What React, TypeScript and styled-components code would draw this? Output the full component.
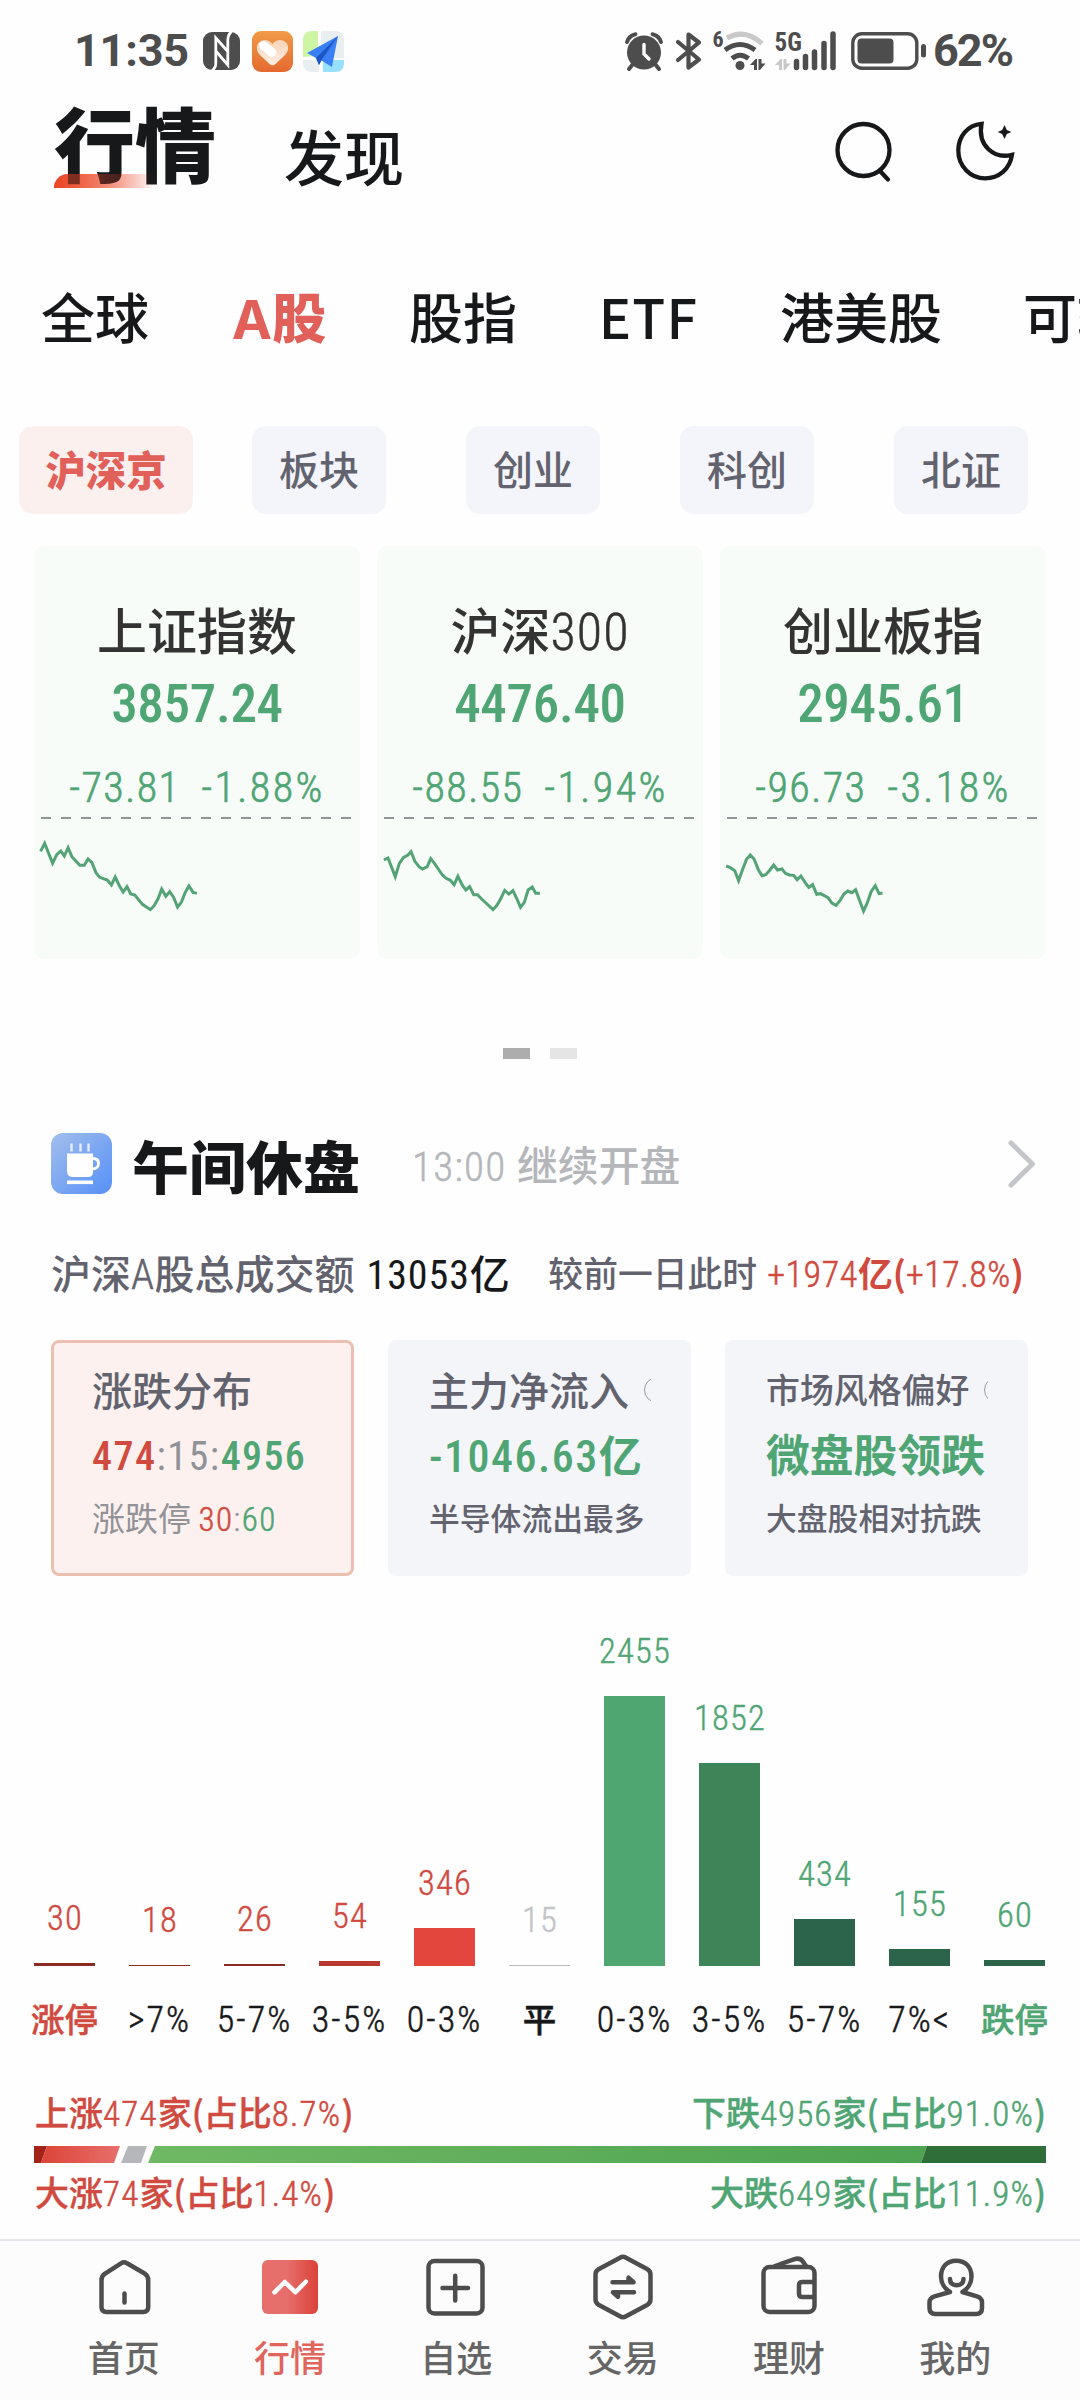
import React from 'react';
import styled, { createGlobalStyle } from 'styled-components';

const CJK = `"Noto Sans CJK SC", "Noto Sans", sans-serif`;
const DIN = `"Roboto Condensed", Roboto, sans-serif`;
const RED = '#d04a40';
const GREEN = '#4fa573';
const INK = '#17181a';
const SLATE = '#62636f';

const Global = createGlobalStyle`
  html, body { margin: 0; background: #fff; }
  * { box-sizing: border-box; }
  body { font-family: ${CJK}; color: ${INK}; }
  svg { display: block; flex: none; overflow: visible; }
`;

const Page = styled.div`
  width: 1080px;
  height: 2400px;
  overflow: hidden;
  background: #fefefe;
  display: flex;
  flex-direction: column;
  & > * { flex-shrink: 0; }
`;

const Num = styled.span<{ $w?: number; $size?: number; $ls?: number; $c?: string }>`
  font-family: ${DIN};
  line-height: 0;
  font-weight: ${p => p.$w ?? 300};
  -webkit-text-stroke: ${p => ((p.$w ?? 300) > 300 ? '0' : '0.5px currentColor')};
  letter-spacing: ${p => p.$ls ?? 1}px;
  ${p => p.$size && `font-size: ${p.$size}px;`}
  ${p => p.$c && `color: ${p.$c};`}
`;

/* ---------- status bar ---------- */

const StatusBar = styled.header`
  height: 102px;
  padding: 0 67px 0 74px;
  display: flex;
  justify-content: space-between;
  align-items: center;
  color: #4d4d4d;
`;
const StatusGroup = styled.div`
  display: flex;
  align-items: center;
`;
const Clock = styled.div`
  width: 129px;
  font: 700 45px/50px Roboto, sans-serif;
  letter-spacing: -0.2px;
`;
const StatusIcon = styled.svg<{ $ml?: number }>`
  margin-left: ${p => p.$ml ?? 0}px;
`;
const Percent = styled.div`
  width: 80px;
  margin-left: 5px;
  font: 700 45px/50px Roboto, sans-serif;
  letter-spacing: -2px;
  white-space: nowrap;
`;
const TinyText = styled.text`
  font-family: ${DIN};
  font-weight: 700;
  fill: #4d4d4d;
`;

/* ---------- header ---------- */

const Header = styled.div`
  height: 86px;
  padding: 0 65px 0 54px;
  display: flex;
  align-items: center;
`;
const MainTitle = styled.h1`
  position: relative;
  z-index: 0;
  margin: 0;
  width: 164px;
  height: 86px;
  font-size: 81px;
  line-height: 77px;
  font-weight: 900;
  white-space: nowrap;
  &::before, &::after {
    content: '';
    position: absolute;
    left: 0;
    bottom: 0;
    width: 101px;
    height: 14px;
    border-top-left-radius: 14px;
    background: linear-gradient(90deg, #ec4626, rgba(236, 70, 38, 0));
  }
  &::before { z-index: -1; }
  &::after { opacity: 0.6; }
`;
const SubTitle = styled.h2`
  margin: 20px auto 0 66px;
  font-size: 60px;
  line-height: 60px;
  font-weight: 500;
`;
const HeaderIcons = styled.div`
  display: flex;
  gap: 60px;
  margin-top: 14px;
`;

/* ---------- tabs ---------- */

const Tabs = styled.nav`
  margin-top: 88px;
  padding-left: 41px;
  height: 80px;
  display: flex;
  gap: 81px;
  overflow: hidden;
`;
const Tab = styled.span<{ $active?: boolean; $width: number; $ls?: number }>`
  flex: none;
  width: ${p => p.$width}px;
  font-size: 54px;
  line-height: 80px;
  font-weight: ${p => (p.$active ? 900 : 500)};
  color: ${p => (p.$active ? '#e2605a' : INK)};
  letter-spacing: ${p => p.$ls ?? 0}px;
  text-align: center;
  white-space: nowrap;
`;
const TabLatin = styled.span`
  font-family: Inter, sans-serif;
  font-weight: 700;
  line-height: 0;
`;

const Pills = styled.div`
  margin: 70px 0 0 -2px;
  display: grid;
  grid-template-columns: repeat(5, 214px);
  justify-items: center;
`;
const Pill = styled.span<{ $active?: boolean }>`
  width: ${p => (p.$active ? 174 : 134)}px;
  margin-left: ${p => (p.$active ? 2 : 0)}px;
  height: 88px;
  border-radius: 14px;
  text-align: center;
  font-size: ${p => (p.$active ? 40.5 : 40)}px;
  line-height: 85px;
  font-weight: ${p => (p.$active ? 900 : 500)};
  color: ${p => (p.$active ? '#e2605a' : SLATE)};
  background: ${p => (p.$active ? '#fcf0ef' : '#f4f5fa')};
`;

/* ---------- index cards ---------- */

const IndexRow = styled.div`
  margin: 32px 34px 0;
  display: grid;
  grid-template-columns: repeat(3, 326px);
  column-gap: 17px;
`;
const IndexCard = styled.article`
  height: 413px;
  padding-top: 52px;
  border-radius: 10px;
  background: #f7fcf9;
  display: flex;
  flex-direction: column;
  align-items: center;
`;
const IndexName = styled.div`
  font-size: 50px;
  line-height: 60px;
  font-weight: 500;
  color: #333;
`;
const IndexValue = styled.div`
  margin-top: 26px;
  height: 40px;
  font: 500 53px/40px ${DIN};
  letter-spacing: -0.3px;
  color: ${GREEN};
`;
const IndexChange = styled.div`
  margin-top: 44px;
  height: 40px;
  display: flex;
  gap: 21px;
  font: 300 42px/40px ${DIN};
  -webkit-text-stroke: 0.6px currentColor;
  letter-spacing: 1.4px;
  color: ${GREEN};
`;
const ChangePct = styled.span`
  letter-spacing: 2.4px;
`;
const BaseLine = styled.div`
  margin-top: 9px;
  width: 312px;
  height: 2px;
  background: repeating-linear-gradient(90deg, #8f9798 0 10px, transparent 10px 20px);
`;

const Pager = styled.div`
  margin-top: 89px;
  display: flex;
  justify-content: center;
  gap: 20px;
`;
const PagerDot = styled.i<{ $on?: boolean }>`
  width: 27px;
  height: 11px;
  background: ${p => (p.$on ? '#adadad' : '#e5e5e5')};
`;

/* ---------- noon section ---------- */

const SectionHead = styled.div`
  margin-top: 74px;
  height: 61px;
  padding: 0 44px 0 51px;
  display: flex;
  align-items: center;
`;
const SectionTitle = styled.h3`
  margin: 0 0 0 20px;
  width: 228px;
  font-size: 57px;
  line-height: 60px;
  font-weight: 900;
  white-space: nowrap;
`;
const SectionNote = styled.div`
  margin: 1px auto 0 52px;
  font-size: 40.8px;
  line-height: 60px;
  font-weight: 500;
  color: #b4b6ba;
  white-space: nowrap;
`;

const Turnover = styled.div`
  margin-top: 53px;
  height: 50px;
  padding: 0 56px 0 51px;
  display: flex;
  justify-content: space-between;
  line-height: 50px;
  white-space: nowrap;
`;
const TurnoverItem = styled.div<{ $size: number }>`
  font-size: ${p => p.$size}px;
  color: ${SLATE};
  font-weight: 500;
`;
const Amount = styled.span<{ $c: string; $w: number; $ml: number }>`
  margin-left: ${p => p.$ml}px;
  color: ${p => p.$c};
  font-weight: ${p => p.$w};
`;

const StatRow = styled.div`
  margin: 43px 51px 0;
  display: grid;
  grid-template-columns: repeat(3, 303px);
  column-gap: 34px;
`;
const StatCard = styled.article<{ $active?: boolean }>`
  height: 236px;
  border-radius: 8px;
  border: 3px solid ${p => (p.$active ? '#ebc0b0' : '#f3f5f9')};
  background: ${p => (p.$active ? '#fcf1ef' : '#f3f5f9')};
  padding: 26px 37px 0 38px;
  white-space: nowrap;
`;
const StatTitle = styled.div<{ $size?: number }>`
  display: flex;
  align-items: center;
  overflow: hidden;
  height: 44px;
  margin: -2px 0;
  font-size: ${p => p.$size ?? 40}px;
  line-height: 44px;
  font-weight: 500;
  color: ${SLATE};
`;
const HelpRing = styled.i`
  flex: none;
  width: 26px;
  height: 26px;
  margin: 1px 0 0 15px;
  border: 1.5px solid #9a9ba3;
  border-radius: 50%;
`;
const StatValue = styled.div<{ $size: number }>`
  margin-top: 19px;
  height: 50px;
  font-size: ${p => p.$size}px;
  line-height: 50px;
  font-weight: 700;
  color: ${GREEN};
`;
const StatFoot = styled.div<{ $size: number; $c?: string; $w?: number }>`
  margin-top: 19px;
  height: 40px;
  font-size: ${p => p.$size}px;
  line-height: 40px;
  font-weight: ${p => p.$w ?? 500};
  color: ${p => p.$c ?? SLATE};
`;

/* ---------- distribution chart ---------- */

const Chart = styled.div`
  height: 390px;
  padding-left: 17px;
  display: grid;
  grid-template-columns: repeat(11, 95px);
  align-items: end;
`;
const Column = styled.div`
  display: flex;
  flex-direction: column;
  align-items: center;
`;
const Count = styled.span<{ $c: string }>`
  margin: 0 0 28px 1px;
  font: 300 34.5px/34px ${DIN};
  -webkit-text-stroke: 0.4px currentColor;
  letter-spacing: 1.2px;
  color: ${p => p.$c};
`;
const Bar = styled.div<{ $h: number; $c: string }>`
  width: 61px;
  height: ${p => p.$h}px;
  background: ${p => p.$c};
`;
const AxisRow = styled.div`
  margin-top: 32px;
  padding-left: 17px;
  height: 40px;
  display: grid;
  grid-template-columns: repeat(11, 95px);
`;
const AxisLabel = styled.span<{ $c: string }>`
  font-size: 33.5px;
  line-height: 40px;
  font-weight: 500;
  -webkit-text-stroke: 0.5px currentColor;
  text-align: center;
  white-space: nowrap;
  color: ${p => p.$c};
`;

const RatioText = styled.div<{ $mt: number }>`
  margin: ${p => p.$mt}px 34px 0 35px;
  height: 40px;
  display: flex;
  justify-content: space-between;
  font-size: 34px;
  line-height: 40px;
  font-weight: 500;
  -webkit-text-stroke: 0.4px currentColor;
`;
const RatioSide = styled.span<{ $c: string }>`
  color: ${p => p.$c};
`;
const RatioChart = styled.svg`
  margin: 14px 34px 0;
`;

/* ---------- bottom navigation ---------- */

const BottomNav = styled.nav`
  margin-top: 27px;
  height: 161px;
  padding: 10px 41.5px 0 40.5px;
  border-top: 2px solid #e5e6ec;
  background: #fcfcfc;
  display: grid;
  grid-template-columns: repeat(6, 1fr);
`;
const NavItem = styled.div<{ $active?: boolean }>`
  display: flex;
  flex-direction: column;
  align-items: center;
  gap: 13px;
  font-size: 36px;
  line-height: 40px;
  font-weight: 500;
  color: ${p => (p.$active ? '#e0655d' : '#666')};
`;
const NavSvg = styled.svg`
  width: 72px;
  height: 72px;
  fill: none;
  stroke: #4d4d4d;
  stroke-width: 4.5;
  stroke-linecap: round;
  stroke-linejoin: round;
`;

const indices = [
  { name: <>上证指数</>, value: '3857.24', diff: '-73.81', pct: '-1.88%',
    line: '118,964 130,940 153,1000 165,974 177,963 187,978 198,953 209,980 232,1006 245,1006 256,987 267,997 279,1028 290,1042 312,1050 324,1065 335,1041 347,1067 358,1086 369,1070 380,1092 392,1095 414,1123 437,1139 448,1127 459,1107 470,1077 482,1099 493,1085 504,1101 516,1131 527,1117 538,1088 549,1068 561,1087 572,1090' },
  { name: <>沪深<Num $size={52}>300</Num></>, value: '4476.40', diff: '-88.55', pct: '-1.94%',
    line: '119,990 131,984 152,1040 164,1000 176,982 188,976 198,965 209,994 221,1010 231,1017 245,1010 255,986 266,1000 277,1017 289,1035 300,1045 312,1051 323,1064 334,1039 346,1064 357,1080 368,1070 380,1094 391,1094 403,1107 436,1139 448,1125 459,1105 470,1081 482,1092 494,1082 505,1106 516,1132 527,1117 538,1080 550,1071 560,1090 572,1090' },
  { name: <>创业板指</>, value: '2945.61', diff: '-96.73', pct: '-3.18%',
    line: '117,1008 129,1013 142,1022 153,1052 164,1020 176,988 187,975 198,987 210,1019 221,1037 232,1034 244,1020 255,1005 266,1020 279,1017 289,1030 301,1035 313,1036 323,1049 334,1038 346,1057 357,1072 368,1064 380,1093 391,1091 413,1103 424,1119 436,1126 448,1111 459,1092 470,1083 482,1088 493,1079 504,1110 516,1143 527,1118 538,1085 550,1067 561,1091 571,1089' },
];

const bins = [
  { label: '涨停', cjk: true, n: 30, h: 3, bar: '#8c2b26', text: RED, axis: RED },
  { label: '>7%', n: 18, h: 1, bar: '#8c2b26', text: RED, axis: INK },
  { label: '5-7%', n: 26, h: 2, bar: '#8c2b26', text: RED, axis: INK },
  { label: '3-5%', n: 54, h: 5, bar: '#b93931', text: RED, axis: INK },
  { label: '0-3%', n: 346, h: 38, bar: '#e3463c', text: RED, axis: INK },
  { label: '平', cjk: true, n: 15, h: 1, bar: '#b9babd', text: '#c3c4c8', axis: INK },
  { label: '0-3%', n: 2455, h: 270, bar: '#4fa670', text: GREEN, axis: INK },
  { label: '3-5%', n: 1852, h: 203, bar: '#3d8459', text: GREEN, axis: INK },
  { label: '5-7%', n: 434, h: 47, bar: '#2b634b', text: GREEN, axis: INK },
  { label: '7%<', n: 155, h: 17, bar: '#2b634b', text: GREEN, axis: INK },
  { label: '跌停', cjk: true, n: 60, h: 6, bar: '#2b634b', text: GREEN, axis: GREEN },
];

const navItems = [
  { label: '首页', icon: <>
    <path d="M13.5 29q0-4 3.2-6.2L33 12.3q3-2 6 0L57 22.8q3.2 2.2 3.2 6.2V56q0 5-5 5H18.5q-5 0-5-5z" />
    <path d="M36.5 42.5v9" /></> },
  { label: '行情', active: true, icon: <>
    <defs><linearGradient id="nav-hot"><stop offset="0.45" stopColor="#e66e6b" /><stop offset="1" stopColor="#da4238" /></linearGradient></defs>
    <rect x="8" y="9" width="56" height="54" rx="6" fill="url(#nav-hot)" stroke="none" />
    <path d="M20.5 41.3 30.8 31l10.7 10.3 10.3-10.6" stroke="#fff" /></> },
  { label: '自选', icon: <>
    <rect x="8.5" y="10" width="54" height="52.5" rx="6" />
    <path d="M22.5 37h25.5M35.2 24.8v24.6" /></> },
  { label: '交易', icon: <>
    <path d="M33 6.7q3-1.8 6 0l21.5 11.6q3 1.8 3 5.4v24.6q0 3.6-3 5.4L39 65.3q-3 1.8-6 0L11.5 53.7q-3-1.8-3-5.4V23.7q0-3.6 3-5.4z" />
    <path d="M25.5 31.2H46.5L41.5 26.7v4M47 41.3H26l5 4.5v-4" /></> },
  { label: '理财', icon: <>
    <rect x="10.5" y="16" width="51" height="45" rx="6" />
    <path d="M22 15 41.5 8.2q5-1.8 8 1.8l3.5 5M61 31H49.5q-3.5 0-3.5 3v9q0 3 3.5 3H61" /></> },
  { label: '我的', icon: <>
    <path d="M43.5 41 58 45.3q5 1.7 5 6V57q0 6-6 6H16.5q-6 0-6-6v-5.7q0-4.3 5-6L31 41C26 38 22 32 22 25.5 22 16 28 9.7 37.2 9.7S52.5 16 52.5 25.5C52.5 32 48.500 38 43.500 41" />
    <path d="M31 28q0 6 6.7 6.2Q44.3 34 44.5 28" /></> },
];

export default function App() {
  return (
    <Page>
      <Global />
      <StatusBar>
        <StatusGroup>
          <Clock>11:35</Clock>
          <StatusIcon width="37" height="38" viewBox="0 0 37 38">
            <rect width="37" height="38" rx="9" fill="#4d4d4d" />
            <path d="M9 38.5Q12.8 36 12.8 31V6L24.8 19.5M28.5-.5Q24.8 3 24.8 8V33L12.8 19" fill="none" stroke="#fefefe" strokeWidth="2.8" />
          </StatusIcon>
          <StatusIcon $ml={12} width="41" height="41" viewBox="0 0 41 41">
            <defs>
              <linearGradient id="orange" x2="0" y2="1"><stop stopColor="#f19a48" /><stop offset="1" stopColor="#e46a30" /></linearGradient>
              <linearGradient id="heart" x2="0" y2="1"><stop stopColor="#f8d3b8" /><stop offset="1" stopColor="#fdeee2" /></linearGradient>
            </defs>
            <rect width="41" height="41" rx="9" fill="url(#orange)" />
            <path d="M20.5 13C17 8 10 7.5 6.5 12c-3.5 4.5-1 9.5 2 12.5l9 8.5q3 2.5 6 0l9-8.5c3-3 5.5-8 2-12.5C31 7.5 24 8 20.5 13z" fill="url(#heart)" />
            <path d="M11.5 14.5 20 21.5" stroke="#fff" strokeWidth="9" strokeLinecap="round" />
          </StatusIcon>
          <StatusIcon $ml={10} width="41" height="41" viewBox="0 0 41 41">
            <path d="M15 0v25L0 26V9q0-9 9-9z" fill="#cdf5a4" />
            <path d="M18 0h14q9 0 9 9v18H18zM0 29h16v12H9q-9 0-9-9z" fill="#e9eff0" />
            <path d="M20 29h21v3q0 9-9 9H20z" fill="#98e1fc" />
            <path d="M35 5 4 22l9 5 3 7 2.5-4.5L29 36z" fill="#3b7ff5" />
            <path d="M35 5 13 27l3 7 2.5-5z" fill="#1c55c4" />
          </StatusIcon>
        </StatusGroup>
        <StatusGroup>
          <StatusIcon width="38" height="38" viewBox="0 0 38 38">
            <circle cx="19" cy="20.5" r="17" fill="#4d4d4d" />
            <path d="M2 10Q4 3.5 10.5 2.2M36 10Q34 3.5 27.5 2.2M8 32l-4 5M30 32l4 5" stroke="#4d4d4d" strokeWidth="4" fill="none" strokeLinecap="round" />
            <path d="M19 12.5v9.500l5 5" stroke="#fff" strokeWidth="3.4" fill="none" strokeLinecap="round" />
          </StatusIcon>
          <StatusIcon $ml={13} width="26" height="38" viewBox="0 0 26 38">
            <path d="M2 10 23 27.5 12.5 35.5V2.5L23 10.5 2 28" stroke="#4d4d4d" strokeWidth="4.2" fill="none" strokeLinejoin="round" strokeLinecap="round" />
          </StatusIcon>
          <StatusIcon $ml={11} width="54" height="42" viewBox="0 0 54 42">
            <TinyText x="-.5" y="17" fontSize="22">6</TinyText>
            <g fill="none" strokeWidth="5">
              <path d="M14 8Q32-2 49 13.5" stroke="#c9c9c9" />
              <path d="M12 20Q27 9 42 20" stroke="#4d4d4d" />
              <path d="M19 28.5Q27 22 35.5 28.5" stroke="#4d4d4d" />
            </g>
            <circle cx="27" cy="35.5" r="4.5" fill="#4d4d4d" />
            <path d="M37 35 42.5 29h1.5v11h-3v-5zM45.5 29h3v4.5h4L47 40h-1.5z" fill="#4d4d4d" />
          </StatusIcon>
          <StatusIcon $ml={8} width="62" height="42" viewBox="0 0 62 42">
            <TinyText x="-.5" y="21" fontSize="25">5G</TinyText>
            <path d="M0 35 5.5 29H7v11H4v-5zM8.500 29h3v4.500h4L10 40H8.500z" fill="#c9c9c9" />
            <path d="M21.5 31.5v6M30.5 26.5v11M39.5 22v15.5M49 13.5v24M58 4v33.5" stroke="#4d4d4d" strokeWidth="5.5" strokeLinecap="round" />
          </StatusIcon>
          <StatusIcon $ml={14} width="77" height="38" viewBox="0 0 77 38">
            <rect x="1.8" y="1.8" width="64" height="34.4" rx="9" fill="none" stroke="#4d4d4d" strokeWidth="3.4" />
            <rect x="6.5" y="6.5" width="36" height="25" rx="4" fill="#4d4d4d" />
            <path d="M72.5 14.5v8.5" stroke="#4d4d4d" strokeWidth="5" strokeLinecap="round" />
          </StatusIcon>
          <Percent>62%</Percent>
        </StatusGroup>
      </StatusBar>

      <Header>
        <MainTitle>行情</MainTitle>
        <SubTitle>发现</SubTitle>
        <HeaderIcons>
          <svg width="60" height="62" viewBox="0 0 60 62" fill="none" stroke={INK} strokeWidth="4.3">
            <circle cx="28.5" cy="29" r="26" />
            <path d="m45 50 8 8.5" strokeLinecap="round" />
          </svg>
          <svg width="60" height="62" viewBox="0 0 60 62">
            <path d="M26.5 2.8C12.5 4 3.3 15.5 3.3 29.5 3.3 45.5 15.8 57.3 30 57.3c14 0 25-9.3 27-23.5-18 4.5-34.5-9-30.5-31z" fill="none" stroke={INK} strokeWidth="4.3" />
            <path d="m49.5 4 2.3 5 4.5 2-4.5 2-2.3 5-2.3-5-4.5-2 4.5-2z" fill={INK} />
          </svg>
        </HeaderIcons>
      </Header>

      <Tabs>
        <Tab $width={108}>全球</Tab>
        <Tab $width={98} $active><TabLatin>A</TabLatin>股</Tab>
        <Tab $width={108}>股指</Tab>
        <Tab $width={101} $ls={1.2}>ETF</Tab>
        <Tab $width={162}>港美股</Tab>
        <Tab $width={162}>可转债</Tab>
      </Tabs>

      <Pills>
        <Pill $active>沪深京</Pill>
        <Pill>板块</Pill>
        <Pill>创业</Pill>
        <Pill>科创</Pill>
        <Pill>北证</Pill>
      </Pills>

      <IndexRow>
        {indices.map(i => (
          <IndexCard key={i.value}>
            <IndexName>{i.name}</IndexName>
            <IndexValue>{i.value}</IndexValue>
            <IndexChange><span>{i.diff}</span><ChangePct>{i.pct}</ChangePct></IndexChange>
            <BaseLine />
            <svg width="326" height="130" viewBox="99 867 947 390" preserveAspectRatio="none">
              <polyline points={i.line} fill="none" stroke="#54a375" strokeWidth="3" vectorEffect="non-scaling-stroke" />
            </svg>
          </IndexCard>
        ))}
      </IndexRow>

      <Pager><PagerDot $on /><PagerDot /></Pager>

      <SectionHead>
        <svg width="61" height="61" viewBox="0 0 61 61">
          <defs><linearGradient id="cup" x2="1" y2="1"><stop stopColor="#a3beec" /><stop offset="1" stopColor="#5590f8" /></linearGradient></defs>
          <rect width="61" height="61" rx="12" fill="url(#cup)" />
          <path d="M20.5 10.5v8M29.5 10.5v8M37.5 10.5v8" stroke="#e4edfc" strokeWidth="2.4" />
          <path d="M16 20.5h26V39q0 5-5 5H22q-6 0-6-6z" fill="#fff" />
          <path d="M42 25.5q5.5 0 5.5 5t-6 5.5" fill="none" stroke="#fff" strokeWidth="2.8" />
          <path d="M16 49.3h26" stroke="#fff" strokeWidth="3.6" />
        </svg>
        <SectionTitle>午间休盘</SectionTitle>
        <SectionNote><Num $size={41} $ls={1.3}>13:00 </Num>继续开盘</SectionNote>
        <svg width="28" height="48" viewBox="0 0 28 48">
          <path d="M3 3 24.5 24 3 45" fill="none" stroke="#c4c5c8" strokeWidth="5" strokeLinecap="round" strokeLinejoin="round" />
        </svg>
      </SectionHead>

      <Turnover>
        <TurnoverItem $size={40}>
          沪深<Num $size={42} $ls={0.5}>A</Num>股总成交额
          <Amount $c={INK} $w={500} $ml={12}><Num $w={400} $ls={0.9}>13053</Num>亿</Amount>
        </TurnoverItem>
        <TurnoverItem $size={34.8}>
          较前一日此时
          <Amount $c={RED} $w={700} $ml={10}><Num $size={36} $ls={0.6}>+1974</Num>亿(<Num $size={36} $ls={0.5}>+17.8%</Num>)</Amount>
        </TurnoverItem>
      </Turnover>

      <StatRow>
        <StatCard $active>
          <StatTitle>涨跌分布</StatTitle>
          <StatValue $size={40}>
            <Num $w={500} $ls={1.5} $c={RED}>474</Num>
            <Num $w={400} $ls={1.5} $c="#919298">:15:</Num>
            <Num $w={500} $ls={1.4}>4956</Num>
          </StatValue>
          <StatFoot $size={33} $c="#929297" $w={400}>
            涨跌停 <Num $ls={1.5} $c={RED}>30</Num><Num $ls={1.5}>:</Num><Num $ls={1.5} $c={GREEN}>60</Num>
          </StatFoot>
        </StatCard>
        <StatCard>
          <StatTitle>主力净流入<HelpRing /></StatTitle>
          <StatValue $size={43}><Num $w={500} $size={44} $ls={1.5}>-1046.63</Num>亿</StatValue>
          <StatFoot $size={30.8}>半导体流出最多</StatFoot>
        </StatCard>
        <StatCard>
          <StatTitle $size={33.9}>市场风格偏好<HelpRing /></StatTitle>
          <StatValue $size={43.8}>微盘股领跌</StatValue>
          <StatFoot $size={30.8}>大盘股相对抗跌</StatFoot>
        </StatCard>
      </StatRow>

      <Chart>
        {bins.map(b => (
          <Column key={b.n}>
            <Count $c={b.text}>{b.n}</Count>
            <Bar $h={b.h} $c={b.bar} />
          </Column>
        ))}
      </Chart>
      <AxisRow>
        {bins.map(b => (
          <AxisLabel key={b.n} $c={b.axis}>
            {b.cjk ? b.label : <Num $size={36} $ls={2}>{b.label}</Num>}
          </AxisLabel>
        ))}
      </AxisRow>

      <RatioText $mt={54}>
        <RatioSide $c={RED}>上涨<Num $size={35} $ls={1.2}>474</Num>家(占比<Num $size={35} $ls={1.2}>8.7%</Num>)</RatioSide>
        <RatioSide $c={GREEN}>下跌<Num $size={35} $ls={1.1}>4956</Num>家(占比<Num $size={35} $ls={1.1}>91.0%</Num>)</RatioSide>
      </RatioText>
      <RatioChart width="1012" height="17" viewBox="0 0 1012 17">
        <defs>
          <linearGradient id="up"><stop stopColor="#dd4438" /><stop offset="1" stopColor="#e76f6b" /></linearGradient>
          <linearGradient id="down"><stop stopColor="#70b964" /><stop offset="1" stopColor="#4da351" /></linearGradient>
        </defs>
        <path d="M0 0h13L7 17H0z" fill="#a32219" />
        <path d="M13 0h73l-6 17H7z" fill="url(#up)" />
        <path d="M94 0h19l-6 17H87z" fill="#b6b7bb" />
        <path d="M121 0h772l-6 17H114z" fill="url(#down)" />
        <path d="M893 0h119v17H887z" fill="#2f6e39" />
      </RatioChart>
      <RatioText $mt={9}>
        <RatioSide $c={RED}>大涨<Num $size={35} $ls={1.2}>74</Num>家(占比<Num $size={35} $ls={1.2}>1.4%</Num>)</RatioSide>
        <RatioSide $c={GREEN}>大跌<Num $size={35} $ls={1.1}>649</Num>家(占比<Num $size={35} $ls={1.1}>11.9%</Num>)</RatioSide>
      </RatioText>

      <BottomNav>
        {navItems.map(n => (
          <NavItem key={n.label} $active={n.active}>
            <NavSvg viewBox="0 0 72 72">{n.icon}</NavSvg>
            {n.label}
          </NavItem>
        ))}
      </BottomNav>
    </Page>
  );
}
